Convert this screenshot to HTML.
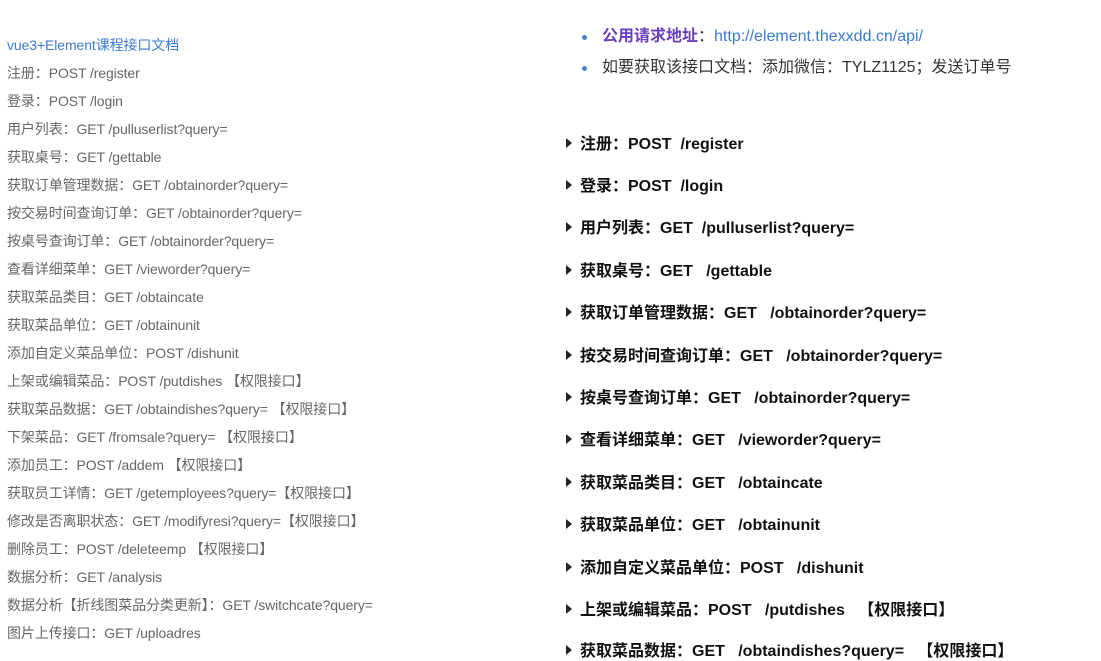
<!DOCTYPE html>
<html><head><meta charset="utf-8"><style>
body{margin:0;width:1101px;height:654px;overflow:hidden;background:#fff;font-family:"Liberation Sans","Noto Sans CJK SC",sans-serif;position:relative}
.l{position:absolute;left:7px;font-size:14px;color:#666;white-space:nowrap;line-height:16px;letter-spacing:-0.1px}
.r{position:absolute;left:566px;font-size:16px;font-weight:bold;color:#111;white-space:nowrap;line-height:18px}
.r:before{content:"";display:inline-block;width:0;height:0;border-left:6px solid #222;border-top:5px solid transparent;border-bottom:5px solid transparent;margin-right:8px;vertical-align:1px}
.b{position:absolute;left:584px;font-size:16px;color:#333;white-space:nowrap;line-height:18px}
.b:before{content:"";position:absolute;left:-2px;top:7px;width:5px;height:5px;border-radius:50%;background:#4a7fd0}
.b span{margin-left:18px}
</style></head><body>
<div class="l" style="top:37px;color:#3b7bd0">vue3+Element课程接口文档</div>
<div class="l" style="top:65px">注册：POST /register</div>
<div class="l" style="top:93px">登录：POST /login</div>
<div class="l" style="top:121px">用户列表：GET /pulluserlist?query=</div>
<div class="l" style="top:149px">获取桌号：GET /gettable</div>
<div class="l" style="top:177px">获取订单管理数据：GET /obtainorder?query=</div>
<div class="l" style="top:205px">按交易时间查询订单：GET /obtainorder?query=</div>
<div class="l" style="top:233px">按桌号查询订单：GET /obtainorder?query=</div>
<div class="l" style="top:261px">查看详细菜单：GET /vieworder?query=</div>
<div class="l" style="top:289px">获取菜品类目：GET /obtaincate</div>
<div class="l" style="top:317px">获取菜品单位：GET /obtainunit</div>
<div class="l" style="top:345px">添加自定义菜品单位：POST /dishunit</div>
<div class="l" style="top:373px">上架或编辑菜品：POST /putdishes 【权限接口】</div>
<div class="l" style="top:401px">获取菜品数据：GET /obtaindishes?query= 【权限接口】</div>
<div class="l" style="top:429px">下架菜品：GET /fromsale?query= 【权限接口】</div>
<div class="l" style="top:457px">添加员工：POST /addem 【权限接口】</div>
<div class="l" style="top:485px">获取员工详情：GET /getemployees?query=【权限接口】</div>
<div class="l" style="top:513px">修改是否离职状态：GET /modifyresi?query=【权限接口】</div>
<div class="l" style="top:541px">删除员工：POST /deleteemp 【权限接口】</div>
<div class="l" style="top:569px">数据分析：GET /analysis</div>
<div class="l" style="top:597px">数据分析【折线图菜品分类更新】：GET /switchcate?query=</div>
<div class="l" style="top:625px">图片上传接口：GET /uploadres</div>

<div class="b" style="top:28px"><span><b style="color:#6a3fc0">公用请求地址</b>：<span style="margin:0;color:#3b7bd0">http://element.thexxdd.cn/api/</span></span></div>
<div class="b" style="top:59px"><span>如要获取该接口文档：添加微信：TYLZ1125；发送订单号</span></div>

<div class="r" style="top:136px">注册：POST &nbsp;/register</div>
<div class="r" style="top:178px">登录：POST &nbsp;/login</div>
<div class="r" style="top:220px">用户列表：GET &nbsp;/pulluserlist?query=</div>
<div class="r" style="top:263px">获取桌号：GET &nbsp;&nbsp;/gettable</div>
<div class="r" style="top:305px">获取订单管理数据：GET &nbsp;&nbsp;/obtainorder?query=</div>
<div class="r" style="top:348px">按交易时间查询订单：GET &nbsp;&nbsp;/obtainorder?query=</div>
<div class="r" style="top:390px">按桌号查询订单：GET &nbsp;&nbsp;/obtainorder?query=</div>
<div class="r" style="top:432px">查看详细菜单：GET &nbsp;&nbsp;/vieworder?query=</div>
<div class="r" style="top:475px">获取菜品类目：GET &nbsp;&nbsp;/obtaincate</div>
<div class="r" style="top:517px">获取菜品单位：GET &nbsp;&nbsp;/obtainunit</div>
<div class="r" style="top:560px">添加自定义菜品单位：POST &nbsp;&nbsp;/dishunit</div>
<div class="r" style="top:602px">上架或编辑菜品：POST &nbsp;&nbsp;/putdishes &nbsp;&nbsp;【权限接口】</div>
<div class="r" style="top:643px">获取菜品数据：GET &nbsp;&nbsp;/obtaindishes?query= &nbsp;&nbsp;【权限接口】</div>
</body></html>
